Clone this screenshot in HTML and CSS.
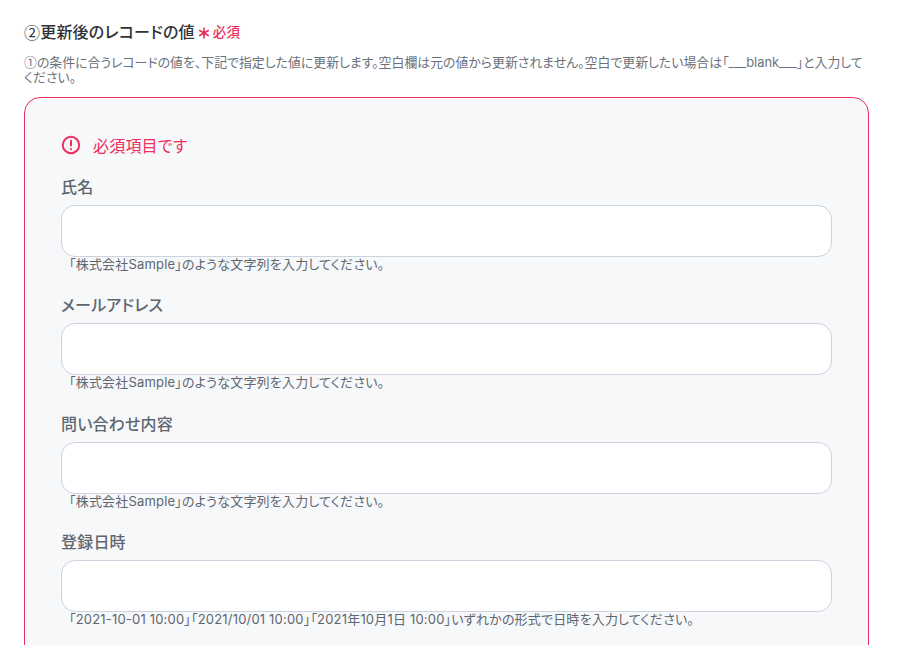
FILE: index.html
```html
<!DOCTYPE html>
<html lang="ja">
<head>
  <meta charset="UTF-8" />
  <title>更新後のレコードの値</title>
  <link rel="stylesheet" href="styles.css">
</head>
<body>
  <section class="section">
    <h2 class="section-title"><span class="circled">②</span>更新後のレコードの値<span class="required"><svg class="required-mark" width="12" height="12" viewBox="0 0 12 12" fill="none" stroke="currentColor" stroke-width="1.6" stroke-linecap="round"><path d="M6 1v10M1.7 3.5l8.6 5M10.3 3.5l-8.6 5" /></svg>必須</span></h2>
    <p class="section-desc"><span class="circled circled-small">①</span>の条件に合うレコードの値を、下記で指定した値に更新します。空白欄は元の値から更新されません。空白で更新したい場合は「___blank___」と入力してください。</p>

    <div class="card">
      <div class="error">
        <svg class="error-icon" width="20" height="20" viewBox="0 0 20 20" fill="none" stroke="currentColor" stroke-width="2" stroke-linecap="round">
          <circle cx="10" cy="10" r="8.2" />
          <path d="M10 5.8v4.8" />
          <path d="M10 14v.2" />
        </svg>
        <span>必須項目です</span>
      </div>

      <div class="field">
        <label class="field-label">氏名</label>
        <input class="field-input" type="text" />
        <p class="field-help">「株式会社Sample」のような文字列を入力してください。</p>
      </div>
      <div class="field">
        <label class="field-label">メールアドレス</label>
        <input class="field-input" type="text" />
        <p class="field-help">「株式会社Sample」のような文字列を入力してください。</p>
      </div>
      <div class="field">
        <label class="field-label">問い合わせ内容</label>
        <input class="field-input" type="text" />
        <p class="field-help">「株式会社Sample」のような文字列を入力してください。</p>
      </div>
      <div class="field">
        <label class="field-label">登録日時</label>
        <input class="field-input" type="text" />
        <p class="field-help">「2021-10-01 10:00」「2021/10/01 10:00」「2021年10月1日 10:00」いずれかの形式で日時を入力してください。</p>
      </div>
    </div>
  </section>
</body>
</html>
```

FILE: styles.css
```css
* { box-sizing: border-box; }

html, body {
  height: 645px;
  overflow: hidden;
}

body {
  margin: 0;
  background: #fff;
  color: #5e6670;
  font-family: Inter, 'Noto Sans CJK JP', sans-serif;
  font-feature-settings: "palt";
  letter-spacing: 0.2px;
}

.section {
  width: 869px;
  padding: 22px 0 0 24px;
}

.circled {
  font-family: 'Noto Sans CJK JP', sans-serif;
  font-weight: 400;
}

.circled-small {
  display: inline-block;
  height: 15px;
  line-height: 15px;
}

.section-title {
  display: flex;
  align-items: center;
  margin: 0;
  height: 20px;
  font-size: 16px;
  font-weight: 500;
  line-height: 20px;
  color: #2f3338;
}

.required {
  display: flex;
  align-items: center;
  margin-left: 3px;
  font-size: 13.5px;
  color: #ee2e5c;
}

.required-mark {
  margin: 2px 3px 0 0;
}

.section-desc {
  margin: 12px 0 0;
  font-size: 12.9px;
  line-height: 15px;
  letter-spacing: 0;
  color: #6b727b;
}

.card {
  margin-top: 12px;
  height: 700px;
  padding: 36px 36px;
  background: #f7f8fa;
  border: 1px solid #e8305f;
  border-radius: 16px;
}

.error {
  display: flex;
  align-items: center;
  gap: 12px;
  height: 22px;
  font-size: 16px;
  color: #ee2e5c;
}

.error-icon {
  flex-shrink: 0;
}

.field {
  margin-bottom: 23.33px;
}

.error + .field .field-label {
  margin-top: 21px;
}

.field-label {
  display: block;
  font-size: 16px;
  font-weight: 500;
  line-height: 20px;
  color: #5e6670;
}

.field-input {
  display: block;
  width: 100%;
  height: 52px;
  margin-top: 8px;
  background: #fff;
  border: 1px solid #ccd2de;
  border-radius: 14px;
}

.field-help {
  margin: 0;
  padding-left: 8px;
  font-size: 13px;
  line-height: 15px;
  letter-spacing: 0.19px;
  color: #5e6670;
}
```
